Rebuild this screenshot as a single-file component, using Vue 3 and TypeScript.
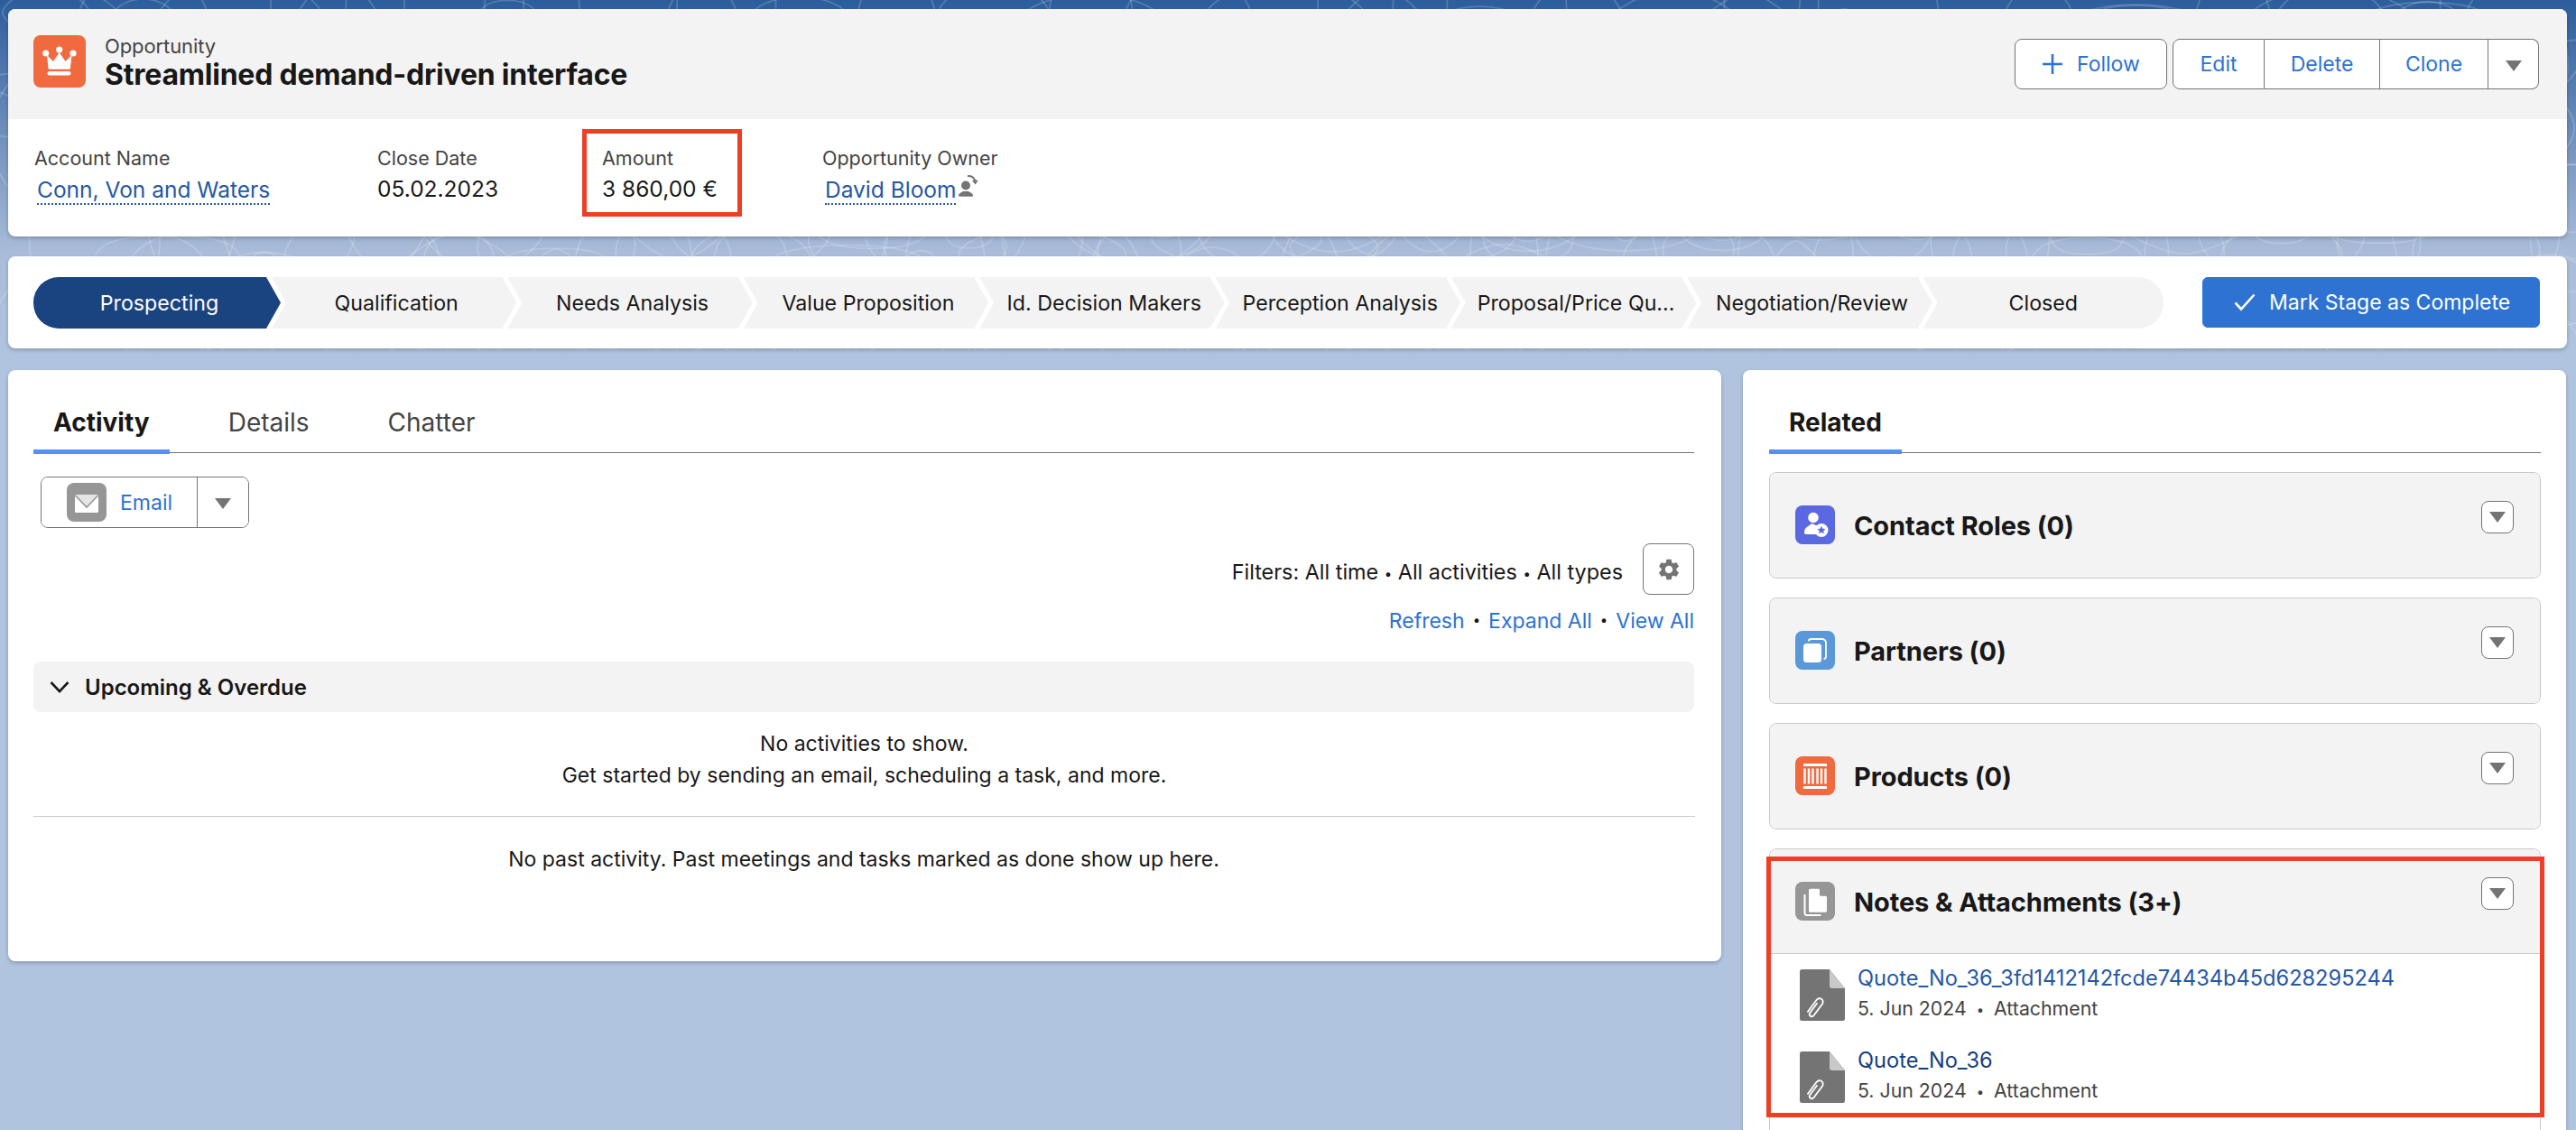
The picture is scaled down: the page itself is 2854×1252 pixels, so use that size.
<script setup lang="ts">
const stages = [
  'Prospecting', 'Qualification', 'Needs Analysis', 'Value Proposition', 'Id. Decision Makers',
  'Perception Analysis', 'Proposal/Price Qu...', 'Negotiation/Review', 'Closed',
]

function wave(seed: number): string {
  let x = seed
  const r = () => { x = (x * 9301 + 49297) % 233280; return x / 233280 }
  const cx = r() * 2854
  const cy = r() * 420
  const a = 30 + r() * 70
  const b = 25 + r() * 55
  const k = 0.55 * (0.5 + r())
  return `M${cx - a} ${cy}C${cx - a} ${cy - b * k} ${cx - a * k} ${cy - b} ${cx} ${cy - b}S${cx + a} ${cy - b * k} ${cx + a} ${cy}S${cx + a * k} ${cy + b} ${cx} ${cy + b}S${cx - a} ${cy + b * k} ${cx - a} ${cy}Z`
}
const waves: string[] = Array.from({ length: 260 }, (_, i) => wave(i * 137 + 11))

const related = [
  { name: 'Contact Roles (0)', kind: 'contact' },
  { name: 'Partners (0)', kind: 'partner' },
  { name: 'Products (0)', kind: 'product' },
]
const files = [
  { name: 'Quote_No_36_3fd1412142fcde74434b45d628295244', dark: false },
  { name: 'Quote_No_36', dark: true },
]
</script>

<template>
  <div class="page">
    <svg class="topo" width="2854" height="388" viewBox="0 0 2854 388" aria-hidden="true">
      <path v-for="(d, i) in waves" :key="i" :d="d" />
    </svg>

    <section class="card highlights">
      <header class="hl-head">
        <div class="hl-title">
          <span class="obj-icon">
            <svg viewBox="0 0 58 58" width="58" height="58">
              <circle cx="13.7" cy="20" r="3.6" fill="#fff" />
              <circle cx="28.7" cy="16" r="3.6" fill="#fff" />
              <circle cx="44" cy="20" r="3.6" fill="#fff" />
              <path d="M15 22l7 7 6.7-10 6.8 10 7-7-1.6 14.4a1.5 1.5 0 0 1-1.5 1.3H18a1.5 1.5 0 0 1-1.5-1.3z" fill="#fff" />
              <rect x="15.5" y="40" width="26" height="4.4" rx="2.2" fill="#fff" />
            </svg>
          </span>
          <div>
            <div class="obj-type">Opportunity</div>
            <h1 class="obj-name">Streamlined demand-driven interface</h1>
          </div>
        </div>
        <div class="hl-actions">
          <button class="btn follow">
            <svg class="plus" viewBox="0 0 22 22" width="22" height="22"><path d="M11 0v22M0 11h22" stroke="#2e72d2" stroke-width="2.6" fill="none" /></svg>
            Follow
          </button>
          <div class="btn-group">
            <button class="btn seg edit">Edit</button>
            <button class="btn seg del">Delete</button>
            <button class="btn seg clone">Clone</button>
            <button class="btn seg caret-btn"><span class="caret"></span></button>
          </div>
        </div>
      </header>
      <div class="fields">
        <div class="field">
          <div class="f-label">Account Name</div>
          <a class="f-link account">Conn, Von and Waters</a>
        </div>
        <div class="field">
          <div class="f-label">Close Date</div>
          <div class="f-value">05.02.2023</div>
        </div>
        <div class="field amount">
          <div class="f-label">Amount</div>
          <div class="f-value">3 860,00 €</div>
          <span class="mark amount-mark"></span>
        </div>
        <div class="field">
          <div class="f-label">Opportunity Owner</div>
          <div class="owner">
            <a class="f-link">David Bloom</a>
            <svg class="owner-ic" viewBox="0 0 22 26" width="22" height="26">
              <circle cx="8" cy="13.500" r="5" fill="#747474" />
              <path d="M0 24.500c0-1 .6-2 2-2.800l3-1.700h6l3 1.700c1.400.8 2 1.800 2 2.800 0 .7-.4 1.200-1 1.200H1c-.6 0-1-.5-1-1.200z" fill="#747474" />
              <path d="M10 3.200a7.500 7.500 0 0 1 8.500 5.300" stroke="#747474" stroke-width="2" fill="none" />
              <path d="M14.800 7.600l7 .2-3.200 4.800z" fill="#747474" />
            </svg>
          </div>
        </div>
      </div>
    </section>

    <section class="card path-card">
      <div class="path">
        <div v-for="(s, i) in stages" :key="s" class="stage" :class="{ first: i === 0, last: i === stages.length - 1 }">
          <span>{{ s }}</span>
        </div>
      </div>
      <button class="complete">
        <svg viewBox="0 0 24 20" width="24" height="20"><path d="M1.500 10.500l6.500 7L22.500 1.500" stroke="#fff" stroke-width="2.600" fill="none" /></svg>
        Mark Stage as Complete
      </button>
    </section>

    <div class="columns">
      <section class="card activity">
        <nav class="tabs">
          <a class="tab active">Activity</a>
          <a class="tab">Details</a>
          <a class="tab">Chatter</a>
        </nav>
        <div class="email-row">
          <div class="email-group">
            <button class="email-main">
              <span class="sq grey">
                <svg viewBox="0 0 44 43" width="44" height="43">
                  <rect x="9" y="13" width="26" height="20" rx="1.500" fill="#fff" />
                  <path d="M9 13h26L22 27z" fill="#e4e4e4" />
                  <path d="M9 13.500L22 27l13-13.500" stroke="#969696" stroke-width="1.600" fill="none" />
                </svg>
              </span>
              <span class="email-text">Email</span>
            </button>
            <button class="email-caret"><span class="caret"></span></button>
          </div>
        </div>
        <div class="filter-row">
          <span>Filters: All time <i>•</i> All activities <i>•</i> All types</span>
          <button class="gear">
            <svg viewBox="0 0 24 24" width="28" height="28"><path fill="#747474" d="M19.140 12.940c.04-.3.06-.61.06-.94 0-.32-.02-.64-.07-.94l2.030-1.580a.49.49 0 0 0 .12-.61l-1.920-3.320a.488.488 0 0 0-.59-.22l-2.390.96c-.5-.38-1.030-.7-1.620-.94l-.36-2.540a.484.484 0 0 0-.48-.41h-3.840c-.24 0-.43.17-.47.41l-.36 2.540c-.59.24-1.130.57-1.620.94l-2.390-.96c-.22-.08-.47 0-.59.22L2.740 8.870c-.12.21-.08.47.12.61l2.030 1.580c-.05.3-.09.63-.09.94s.02.64.07.94l-2.030 1.580a.49.49 0 0 0-.12.61l1.920 3.320c.12.22.37.29.59.22l2.390-.96c.5.38 1.030.7 1.620.94l.36 2.540c.05.24.24.41.48.41h3.840c.24 0 .44-.17.47-.41l.36-2.540c.59-.24 1.130-.56 1.620-.94l2.390.96c.22.08.47 0 .59-.22l1.920-3.320c.12-.22.07-.47-.12-.61l-2.010-1.580zM12 15.600c-1.980 0-3.600-1.620-3.600-3.600s1.620-3.600 3.600-3.600 3.600 1.620 3.600 3.600-1.620 3.600-3.600 3.600z" /></svg>
          </button>
        </div>
        <div class="link-row">
          <a>Refresh</a><i>•</i><a>Expand All</a><i>•</i><a>View All</a>
        </div>
        <div class="upcoming">
          <svg viewBox="0 0 22 14" width="22" height="14"><path d="M1.500 2L11 12l9.500-10" stroke="#181818" stroke-width="2.600" fill="none" /></svg>
          <span>Upcoming &amp; Overdue</span>
        </div>
        <div class="empty">
          <p>No activities to show.</p>
          <p>Get started by sending an email, scheduling a task, and more.</p>
        </div>
        <div class="past">No past activity. Past meetings and tasks marked as done show up here.</div>
      </section>

      <section class="card related">
        <nav class="tabs">
          <a class="tab active rel-tab">Related</a>
        </nav>
        <div class="rel-list">
          <article v-for="r in related" :key="r.name" class="rel-card">
            <header class="rel-head">
              <span class="sq" :class="r.kind">
                <svg v-if="r.kind === 'contact'" viewBox="0 0 44 43" width="44" height="43">
                  <circle cx="20" cy="13.500" r="5.800" fill="#fff" />
                  <path d="M18 20c-2.200 3-8 3.500-8 10 0 1.200.6 2 2 2h12c-2-2-2.500-7 .5-9.500z" fill="#fff" />
                  <circle cx="29" cy="27.500" r="7.500" fill="#fff" />
                  <path d="M29 22.800l1.400 3 3.100.3-2.300 2.100.7 3.100-2.900-1.600-2.900 1.600.7-3.100-2.300-2.100 3.100-.3z" fill="#5a68e2" />
                </svg>
                <svg v-else-if="r.kind === 'partner'" viewBox="0 0 44 43" width="44" height="43">
                  <path d="M15 11.500c0-1.500 1-2.500 2.500-2.500h12.500c2 0 4 2 4 4v15.500c0 1.500-1 2.500-2.500 2.500" stroke="#fff" stroke-width="1.800" fill="none" />
                  <rect x="9" y="14" width="20" height="21" rx="3.500" fill="#fff" />
                </svg>
                <svg v-else viewBox="0 0 44 43" width="44" height="43">
                  <rect x="9" y="8" width="26" height="3" fill="#fff" />
                  <rect x="9" y="33" width="26" height="3" fill="#fff" />
                  <path d="M10.500 13.500v17M15 13.500v17M19.500 13.500v17M24.500 13.500v17M29 13.500v17M33.500 13.500v17" stroke="#fff" stroke-width="2.400" />
                </svg>
              </span>
              <h2 class="rel-name">{{ r.name }}</h2>
              <button class="mini"><span class="caret"></span></button>
            </header>
          </article>
          <article class="rel-card notes">
            <header class="rel-head">
              <span class="sq grey">
                <svg viewBox="0 0 44 43" width="44" height="43">
                  <path d="M10.500 14v20.500c0 1.500 1 2.500 2.500 2.500h15.500" stroke="#fff" stroke-width="2" fill="none" />
                  <path d="M15 9.500c0-1 .8-1.800 1.800-1.800H26l9 9v15.300c0 1-.8 1.800-1.800 1.800H16.800c-1 0-1.800-.8-1.800-1.800z" fill="#fff" />
                  <path d="M27 7.700l8 8h-6.500c-.9 0-1.500-.6-1.500-1.500z" fill="#969696" />
                </svg>
              </span>
              <h2 class="rel-name">Notes &amp; Attachments (3+)</h2>
              <button class="mini"><span class="caret"></span></button>
            </header>
            <ul class="files">
              <li v-for="f in files" :key="f.name" class="file">
                <svg class="file-ic" viewBox="0 0 50 57" width="50" height="57">
                  <path d="M2.500 0H33l17 21v33.500a2.500 2.500 0 0 1-2.500 2.500h-45A2.500 2.500 0 0 1 0 54.500v-52A2.500 2.500 0 0 1 2.500 0z" fill="#747474" />
                  <path d="M33 0l17 21H36a3 3 0 0 1-3-3z" fill="#c9c9c9" />
                  <path d="M10 45.500l10-13.500c1.500-2 4-2.300 5.700-1 1.800 1.300 2 3.700.7 5.500l-9.300 12.500c-1 1.300-2.700 1.500-3.800.7-1.200-.9-1.300-2.500-.4-3.700l8-10.800" transform="translate(-1.500 2)" stroke="#fff" stroke-width="1.800" fill="none" />
                </svg>
                <div>
                  <a class="file-name" :class="{ dark: f.dark }">{{ f.name }}</a>
                  <div class="file-meta">5. Jun 2024 <i>•</i> Attachment</div>
                </div>
              </li>
            </ul>
            <span class="mark notes-mark"></span>
          </article>
        </div>
      </section>
    </div>
  </div>
</template>

<style>
html, body { margin: 0; padding: 0; background: #b0c4df; }
</style>

<style scoped>
.page {
  position: relative;
  box-sizing: border-box;
  width: 2854px;
  height: 1252px;
  overflow: hidden;
  padding: 10px 10px 0 9px;
  font-family: Inter, "Liberation Sans", sans-serif;
  font-size: 23px;
  color: #181818;
  background: linear-gradient(#2c5d9c 0, #a9bcd9 280px, #b0c4df 400px);
}
.topo { position: absolute; left: 0; top: 0; }
.topo path { fill: none; stroke: #fff; stroke-opacity: .18; stroke-width: 1.800; }
button { font-family: inherit; cursor: pointer; padding: 0; }
h1, h2, p, ul { margin: 0; padding: 0; }
i { font-style: normal; }

.card {
  position: relative;
  background: #fff;
  border-radius: 8px;
  box-shadow: 0 2px 4px rgba(0, 0, 0, .22);
}
.highlights { height: 252px; overflow: hidden; }
.hl-head {
  box-sizing: border-box;
  height: 122px;
  padding: 29px 31px 0 28px;
  background: #f3f3f3;
  display: flex;
  justify-content: space-between;
}
.hl-title { display: flex; gap: 21px; }
.obj-icon { width: 58px; height: 58px; border-radius: 8px; background: #f0693f; display: block; }
.obj-icon svg { display: block; }
.obj-type { font-size: 22px; line-height: 26px; color: #444; margin-top: -1px; letter-spacing: -.1px; }
.obj-name { font-size: 32px; line-height: 38px; font-weight: 700; letter-spacing: -.22px; }
.hl-actions { display: flex; gap: 6px; padding-top: 4px; }
.btn {
  box-sizing: border-box;
  height: 56px;
  background: #fff;
  border: 1.500px solid #747474;
  color: #2e72d2;
  font-size: 23px;
}
.follow {
  width: 169px;
  border-radius: 8px;
  display: flex;
  align-items: center;
  gap: 16px;
  padding-left: 30px;
}
.plus { flex: none; }
.btn-group { display: flex; }
.seg { border-radius: 0; border-left: 0; }
.seg.edit { width: 102px; border-left: 1.500px solid #747474; border-radius: 8px 0 0 8px; }
.seg.del { width: 128px; }
.seg.clone { width: 120px; }
.seg.caret-btn { width: 56px; border-radius: 0 8px 8px 0; }
.caret {
  display: inline-block;
  width: 0;
  height: 0;
  border-left: 9px solid transparent;
  border-right: 9px solid transparent;
  border-top: 12px solid #747474;
  vertical-align: middle;
}
.fields {
  display: grid;
  grid-template-columns: 380px 249px 244px auto;
  padding: 30px 0 0 29px;
}
.field { position: relative; }
.f-label { font-size: 21.500px; line-height: 26px; color: #444; }
.f-value { font-size: 24.500px; line-height: 30px; margin-top: 6px; }
.f-link {
  display: inline-block;
  font-size: 24.500px;
  line-height: 30px;
  color: #2558a6;
  border-bottom: 2px dotted #2558a6;
}
.account { margin: 7px 0 0 3px; }
.owner { display: flex; align-items: center; margin: 7px 0 0 3px; }
.owner-ic { margin: -12px 0 0 3px; }
.mark { position: absolute; box-sizing: border-box; border: 5px solid #ee3f24; pointer-events: none; }
.amount-mark { left: -22px; top: -19px; width: 177px; height: 97px; }

.path-card {
  margin-top: 22px;
  height: 102px;
  display: flex;
  padding: 23px 30px 0 28px;
  box-sizing: border-box;
  justify-content: space-between;
}
.path {
  width: 2360px;
  height: 57px;
  display: flex;
  border-radius: 28px;
  overflow: hidden;
}
.stage {
  box-sizing: border-box;
  flex: 1 1 0;
  min-width: 0;
  margin-left: -10px;
  padding-left: 5px;
  background: #f3f3f3;
  display: flex;
  align-items: center;
  justify-content: center;
  white-space: nowrap;
  font-size: 23.200px;
  clip-path: polygon(0 0, calc(100% - 16px) 0, 100% 50%, calc(100% - 16px) 100%, 0 100%, 16px 50%);
}
.stage.first {
  flex: 0 0 274px;
  margin-left: 0;
  background: #1a4480;
  color: #fff;
  clip-path: polygon(0 0, calc(100% - 16px) 0, 100% 50%, calc(100% - 16px) 100%, 0 100%);
}
.stage.last { padding-left: 0; clip-path: polygon(0 0, 100% 0, 100% 100%, 0 100%, 16px 50%); }
.complete {
  box-sizing: border-box;
  width: 374px;
  height: 56px;
  background: #2e72d2;
  border: 1px solid #2e72d2;
  border-radius: 6px;
  color: #fff;
  font-size: 23px;
  display: flex;
  align-items: center;
  gap: 15px;
  padding-left: 34px;
}

.columns {
  display: grid;
  grid-template-columns: 1898px 912px;
  gap: 24px;
  margin-top: 24px;
  align-items: start;
}
.activity { height: 655px; padding: 0 30px 0 28px; box-sizing: border-box; }
.related { height: 900px; padding: 0 28px 0 29px; box-sizing: border-box; }
.tabs {
  height: 92px;
  display: flex;
  gap: 87px;
  border-bottom: 1.500px solid #747474;
  box-sizing: border-box;
  align-items: flex-start;
}
.tab {
  position: relative;
  font-size: 28px;
  line-height: 34px;
  color: #444;
  margin-top: 41px;
}
.tab:first-child { margin-left: 22px; }
.tab.active { font-weight: 700; color: #181818; }
.tab.active::after {
  content: "";
  position: absolute;
  left: -22px;
  right: -22px;
  top: 47px;
  height: 5px;
  background: #5b8fee;
}
.email-row { padding: 26px 0 0 8px; }
.email-group {
  box-sizing: border-box;
  width: 231px;
  height: 57px;
  border: 1.500px solid #747474;
  border-radius: 8px;
  display: flex;
  overflow: hidden;
}
.email-main {
  flex: 1;
  display: flex;
  align-items: center;
  gap: 15px;
  padding-left: 28px;
  background: #fff;
  border: 0;
  border-right: 1.500px solid #747474;
  font-size: 23px;
  color: #2e72d2;
}
.email-caret { width: 56px; background: #fff; border: 0; }
.sq { flex: none; width: 44px; height: 43px; border-radius: 8px; display: block; }
.sq svg { display: block; }
.grey { background: #969696; }
.contact { background: #5a68e2; }
.partner { background: #5a98da; }
.product { background: #f0693f; }
.filter-row {
  margin-top: 17px;
  display: flex;
  justify-content: flex-end;
  align-items: center;
  gap: 22px;
  font-size: 23.400px;
}
.filter-row span { position: relative; top: 3px; }
.gear {
  box-sizing: border-box;
  width: 57px;
  height: 57px;
  background: #fff;
  border: 1.500px solid #747474;
  border-radius: 8px;
  display: flex;
  align-items: center;
  justify-content: center;
}
.filter-row i { font-size: 15px; position: relative; top: -1px; }
.link-row i { font-size: 15px; margin: 0 5px; position: relative; top: -1px; }
.link-row {
  margin-top: 14px;
  display: flex;
  justify-content: flex-end;
  align-items: center;
  gap: 4px;
  color: #2e72d2;
  line-height: 30px;
  font-size: 23px;
}
.link-row i { color: #181818; }
.upcoming {
  margin-top: 30px;
  height: 56px;
  background: #f3f3f3;
  border-radius: 8px;
  display: flex;
  align-items: center;
  gap: 17px;
  padding-left: 18px;
  font-weight: 600;
  font-size: 24px;
}
.empty { text-align: center; padding: 18px 0 0; line-height: 35px; font-size: 23px; height: 97px; border-bottom: 1.500px solid #c9c9c9; margin-right: -1px; }
.past { text-align: center; margin-top: 30px; line-height: 35px; font-size: 23px; }

.rel-tab { margin-left: 22px; }
.rel-list { display: flex; flex-direction: column; gap: 21px; padding-top: 21px; }
.rel-card {
  position: relative;
  border: 1.500px solid #c9c9c9;
  border-radius: 8px;
  background: #fff;
}
.rel-card .rel-head { border-radius: 8px; }
.rel-head {
  box-sizing: border-box;
  height: 116px;
  display: flex;
  align-items: flex-start;
  padding: 36px 29px 0 28px;
  background: #f3f3f3;
}
.rel-name { font-size: 29px; line-height: 45px; font-weight: 700; margin-left: 21px; flex: 1; letter-spacing: -.1px; }
.mini {
  box-sizing: border-box;
  width: 36px;
  height: 36px;
  margin-top: -5px;
  background: #fff;
  border: 1.500px solid #747474;
  border-radius: 8px;
  display: flex;
  align-items: center;
  justify-content: center;
}
.notes .rel-head { border-radius: 8px 8px 0 0; border-bottom: 1.500px solid #c9c9c9; }
.files { list-style: none; padding: 17px 33px 0; height: 300px; box-sizing: border-box; }
.file { display: flex; gap: 14px; height: 91px; }
.file-ic { flex: none; }
.file-name { display: block; color: #2558a6; font-size: 23.600px; line-height: 30px; margin-top: -5px; }
.file-name.dark { color: #153f82; }
.file-meta { font-size: 21.300px; line-height: 30px; color: #444; margin-top: 3px; }
.file-meta i { font-size: 15px; margin: 0 5px; position: relative; top: -1px; }
.notes-mark { left: -4.500px; top: 8px; width: 862px; height: 289px; }
</style>
